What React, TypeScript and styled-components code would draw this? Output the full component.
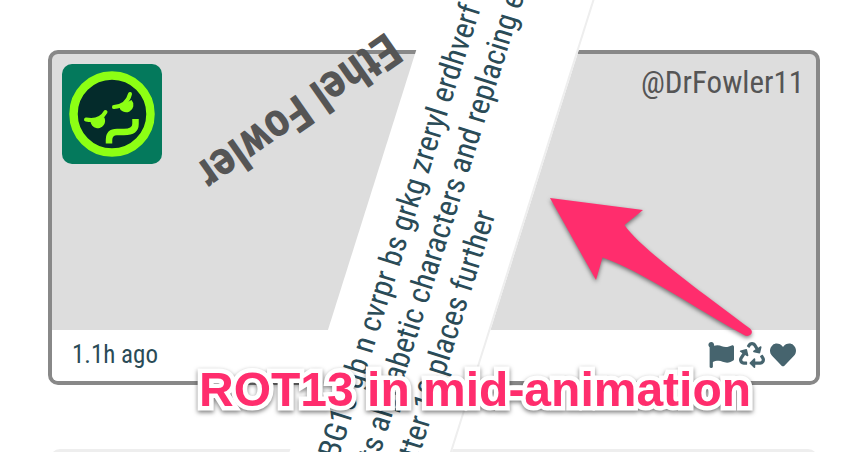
import React from "react";
import styled, { createGlobalStyle } from "styled-components";
import { FaFlag, FaRecycle, FaHeart } from "react-icons/fa";

const GlobalStyle = createGlobalStyle`
  *, *::before, *::after { box-sizing: border-box; }
  body {
    margin: 0;
    background: #fff;
    color: #2a4b57;
    font-family: "Roboto Condensed", "Liberation Sans Narrow", Roboto, sans-serif;
    font-weight: 400;
  }
`;

const Page = styled.main`
  position: relative;
  height: 100vh;
  padding: 50px 48px 0;
  overflow: hidden;
`;

const Feed = styled.div`
  display: flex;
  flex-direction: column;
  gap: 64px;
`;

const Card = styled.article`
  border: 4px solid #888;
  border-radius: 10px;
  background: #ddd;
  overflow: hidden;
`;

const NextCard = styled.article`
  height: 120px;
  margin: 0 2px;
  border: 4px solid #eee;
  border-radius: 10px;
`;

const CardHeader = styled.header`
  display: flex;
  justify-content: space-between;
  align-items: flex-start;
  min-height: 276px;
  padding: 10px 12px 10px 10px;
`;

const Avatar = styled.svg`
  width: 100px;
  height: 100px;
  border-radius: 10px;
`;

const Handle = styled.a`
  color: #555;
  font-size: 31px;
  line-height: 38px;
  text-decoration: none;
`;

const CardFooter = styled.footer`
  display: flex;
  justify-content: space-between;
  align-items: center;
  height: 51px;
  padding: 0 20px 2px;
  background: #fff;
  font-size: 25px;
`;

const Actions = styled.div`
  display: flex;
  gap: 5px;
`;

const ActionButton = styled.button`
  display: flex;
  padding: 0;
  border: 0;
  background: none;
  color: #46646e;
  font-size: 26px;
`;

const SpinningName = styled.h2`
  position: absolute;
  top: 112px;
  left: 299px;
  margin: 0;
  color: #555;
  font-size: 48px;
  line-height: 56px;
  font-weight: 700;
  white-space: nowrap;
  transform: translate(-50%, -50%) rotate(145deg);
`;

const SpinningMessage = styled.div`
  position: absolute;
  top: 226px;
  left: 442px;
  width: 700px;
  height: 155px;
  padding-top: 20px;
  border-bottom: 2px solid #eee;
  background: #fff;
  font-size: 31px;
  line-height: 38px;
  white-space: nowrap;
  transform: translate(-50%, -50%) rotate(-72.5deg);
`;

const Line = styled.p<{ $indent: number }>`
  margin: 0;
  padding-left: ${(p) => p.$indent}px;
`;

const Arrow = styled.svg`
  position: absolute;
  top: 190px;
  left: 540px;
  width: 220px;
  height: 160px;
  filter: drop-shadow(0 2px 2px rgba(0, 0, 0, 0.5));
`;

const Caption = styled.p`
  position: absolute;
  top: 362px;
  left: 199px;
  margin: 0;
  color: #ff2d6d;
  font: 700 48px/56px "Liberation Sans", Arial, sans-serif;
  white-space: nowrap;
  -webkit-text-stroke: 9px #fff;
  paint-order: stroke fill;
  filter: drop-shadow(0 2px 2px rgba(0, 0, 0, 0.5));
`;

const lines = [
  { text: "EBG13 gb n cvrpr bs grkg zreryl erdhverf", indent: 80 },
  { text: "its alphabetic characters and replacing each", indent: 98 },
  { text: "letter 13 places further", indent: 98 },
];

export default function App() {
  return (
    <>
      <GlobalStyle />
      <Page>
        <Feed>
          <Card>
            <CardHeader>
              <Avatar viewBox="0 0 100 100" role="img" aria-label="Ethel Fowler">
                <rect width="100" height="100" fill="#04795c" />
                <circle cx="50" cy="50" r="38.500" fill="#042b2b" stroke="#8dff14" strokeWidth="8.500" />
                <g fill="none" stroke="#8dff14">
                  <path d="M24 55.500Q38 58 43.500 48" strokeWidth="4" strokeLinecap="round" />
                  <path d="M52 43Q65 42 68 30" strokeWidth="4" strokeLinecap="round" />
                  <path d="M47 79.500V76Q47 68 55 68H62Q73.500 68 73.500 60V55" strokeWidth="6.500" />
                </g>
                <g fill="#8dff14">
                  <path d="M28.500 56.500A7.300 7.300 0 1 0 42 53Z" />
                  <path d="M57 42.500A7.300 7.300 0 1 0 69.500 36Z" />
                </g>
              </Avatar>
              <Handle href="#DrFowler11">@DrFowler11</Handle>
            </CardHeader>
            <CardFooter>
              <time>1.1h ago</time>
              <Actions>
                <ActionButton aria-label="Flag"><FaFlag /></ActionButton>
                <ActionButton aria-label="Repost"><FaRecycle /></ActionButton>
                <ActionButton aria-label="Like"><FaHeart /></ActionButton>
              </Actions>
            </CardFooter>
          </Card>
          <NextCard />
        </Feed>
        <SpinningMessage>
          {lines.map((l) => (
            <Line key={l.text} $indent={l.indent}>{l.text}</Line>
          ))}
        </SpinningMessage>
        <SpinningName>Ethel Fowler</SpinningName>
        <Arrow viewBox="540 190 220 160" aria-hidden="true">
          <path
            fill="#ff2d6d"
            d="M550 198L643 210L624.500 225C640 248 700 291 750 328.500C755 333 749 338 744 335C700 311 640 270 602.500 257.500L596 280Z"
          />
        </Arrow>
        <Caption>ROT13 in mid-animation</Caption>
      </Page>
    </>
  );
}
